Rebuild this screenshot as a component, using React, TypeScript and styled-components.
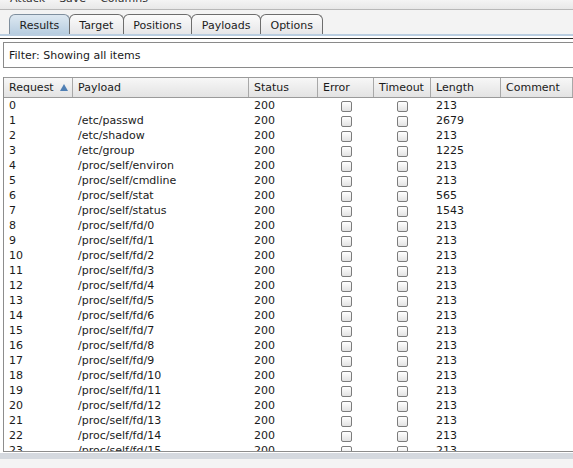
import React from "react";
import styled, { createGlobalStyle } from "styled-components";

const GlobalStyle = createGlobalStyle`
  html, body {
    margin: 0;
    padding: 0;
    background: #ffffff;
  }
  body {
    font-family: "DejaVu Sans", "Liberation Sans", sans-serif;
    font-size: 11px;
    color: #1a1a1a;
  }
`;

const Window = styled.div`
  width: 573px;
  height: 468px;
  overflow: hidden;
  display: flex;
  flex-direction: column;
  background: #ffffff;
`;

const MenuBar = styled.div`
  height: 9px;
  flex: none;
  overflow: hidden;
  display: flex;
  gap: 14px;
  padding: 0 10px;
  background: linear-gradient(#f4f4f4, #e8e8e8);
  border-bottom: 1px solid #b8b8b8;
`;

const MenuItem = styled.span`
  margin-top: -8px;
  line-height: 13px;
  color: #333;
`;

const TabStrip = styled.div`
  flex: none;
  height: 24px;
  display: flex;
  align-items: flex-end;
  padding-left: 10px;
  background: #f3f3f3;
  border-bottom: 2px solid #b9cde0;
`;

const Tab = styled.div<{ $active?: boolean }>`
  height: 20px;
  margin-left: -1px;
  padding: 1px 9.5px 0;
  box-sizing: border-box;
  display: flex;
  align-items: center;
  border: 1px solid ${(p) => (p.$active ? "#7f8f9e" : "#6d6d6d")};
  border-bottom: none;
  border-radius: 6px 6px 0 0;
  background: ${(p) =>
    p.$active
      ? "linear-gradient(#dde8f1, #b7cde0)"
      : "linear-gradient(#fbfbfb, #e6e6e8)"};
  color: #1c1c1c;
  font-size: 11px;
`;

const Content = styled.div`
  flex: 1;
  min-height: 0;
  display: flex;
  flex-direction: column;
  border-top: 1px solid #ffffff;
`;

const DarkRule = styled.div`
  height: 1px;
  flex: none;
  margin-top: 1px;
  background: #2e2e2e;
`;

const FilterBox = styled.div`
  flex: none;
  margin: 3px -4px 0 3px;
  height: 24px;
  display: flex;
  align-items: center;
  padding-left: 5px;
  border: 1px solid #8a8a8a;
  border-right: none;
  background: #ffffff;
`;

const TableFrame = styled.div`
  flex: 1;
  min-height: 0;
  margin: 9px 0 0 3px;
  display: flex;
  flex-direction: column;
  border-left: 1px solid #8d8d8d;
  border-bottom: 1px solid #8d8d8d;
  overflow: hidden;
`;

const cols = "69px 176px 69px 56px 57px 70px 1fr";

const HeaderRow = styled.div`
  flex: none;
  display: grid;
  grid-template-columns: ${cols};
  height: 19px;
  border-top: 1px solid #9a9a9a;
  border-bottom: 1px solid #9a9a9a;
  background: linear-gradient(#f7f7f7, #e3e3e3);
`;

const HeaderCell = styled.div`
  display: flex;
  align-items: center;
  gap: 6px;
  padding-left: 5px;
  border-right: 1px solid #a8a8a8;
  white-space: nowrap;
  overflow: hidden;
`;

const SortArrow = styled.span`
  width: 0;
  height: 0;
  border-left: 4px solid transparent;
  border-right: 4px solid transparent;
  border-bottom: 7px solid #4f7fb4;
`;

const Body = styled.div`
  flex: 1;
  min-height: 0;
  overflow: hidden;
`;

const Row = styled.div`
  display: grid;
  grid-template-columns: ${cols};
  height: 15px;
  align-items: center;
`;

const Cell = styled.div<{ $center?: boolean }>`
  display: flex;
  align-items: center;
  justify-content: ${(p) => (p.$center ? "center" : "flex-start")};
  padding-left: ${(p) => (p.$center ? "0" : "5px")};
  white-space: nowrap;
  overflow: hidden;
  line-height: 15px;
`;

const Check = styled.span`
  width: 9px;
  height: 9px;
  margin-top: 2px;
  border: 1px solid #7c7c7c;
  border-radius: 2px;
  background: linear-gradient(#ffffff, #e2e2e2);
`;

const ScrollTrack = styled.div`
  flex: none;
  height: 6px;
  margin-top: 1px;
  background: #d5d9df;
`;

const StatusArea = styled.div`
  flex: none;
  height: 9px;
  background: #f4f4f4;
`;

const tabs = ["Results", "Target", "Positions", "Payloads", "Options"];
const headers = ["Payload", "Status", "Error", "Timeout", "Length", "Comment"];

const rows: [string, number][] = [
  ["", 213],
  ["/etc/passwd", 2679],
  ["/etc/shadow", 213],
  ["/etc/group", 1225],
  ["/proc/self/environ", 213],
  ["/proc/self/cmdline", 213],
  ["/proc/self/stat", 565],
  ["/proc/self/status", 1543],
];
for (let i = 0; i <= 15; i++) rows.push([`/proc/self/fd/${i}`, 213]);

export default function App() {
  return (
    <>
      <GlobalStyle />
      <Window>
        <MenuBar>
          <MenuItem>Attack</MenuItem>
          <MenuItem>Save</MenuItem>
          <MenuItem>Columns</MenuItem>
        </MenuBar>
        <TabStrip>
          {tabs.map((t, i) => (
            <Tab key={t} $active={i === 0}>
              {t}
            </Tab>
          ))}
        </TabStrip>
        <Content>
          <DarkRule />
          <FilterBox>Filter: Showing all items</FilterBox>
          <TableFrame>
            <HeaderRow>
              <HeaderCell>
                Request <SortArrow />
              </HeaderCell>
              {headers.map((h) => (
                <HeaderCell key={h}>{h}</HeaderCell>
              ))}
            </HeaderRow>
            <Body>
              {rows.map(([payload, length], i) => (
                <Row key={i}>
                  <Cell>{i}</Cell>
                  <Cell>{payload}</Cell>
                  <Cell>200</Cell>
                  <Cell $center>
                    <Check />
                  </Cell>
                  <Cell $center>
                    <Check />
                  </Cell>
                  <Cell>{length}</Cell>
                  <Cell />
                </Row>
              ))}
            </Body>
          </TableFrame>
          <ScrollTrack />
          <StatusArea />
        </Content>
      </Window>
    </>
  );
}
